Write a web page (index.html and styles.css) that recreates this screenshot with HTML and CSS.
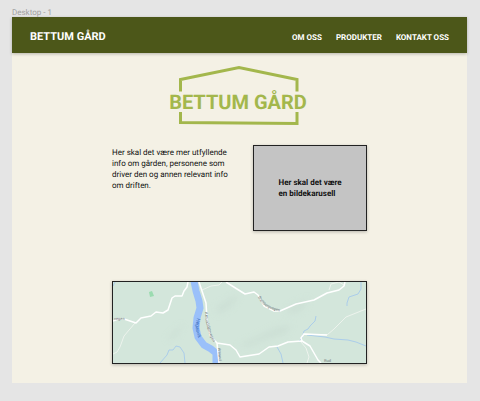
FILE: index.html
```html
<!DOCTYPE html>
<html lang="no">
<head>
<meta charset="utf-8">
<meta name="viewport" content="width=device-width, initial-scale=1">
<title>Bettum Gård</title>
<link rel="stylesheet" href="styles.css">
</head>
<body>
<p class="frame-label">Desktop - 1</p>
<div class="page">
  <header class="header">
    <a class="brand" href="#">BETTUM GÅRD</a>
    <nav class="nav">
      <a href="#om">OM OSS</a>
      <a href="#produkter">PRODUKTER</a>
      <a href="#kontakt">KONTAKT OSS</a>
    </nav>
  </header>
  <main class="main">
    <svg class="logo" viewBox="167 64 146 62" role="img" aria-label="Bettum Gård">
      <path d="M180.500 91.500V79.500L239 67.500L297 79.500V91.500M180.500 112V122.500L297 123.500V112" fill="none" stroke="#a3b74c" stroke-width="3"/>
      <text x="238" y="108.500" text-anchor="middle">BETTUM GÅRD</text>
    </svg>
    <section class="intro" id="om">
      <p class="intro-text">Her skal det være mer utfyllende info om gården, personene som driver den og annen relevant info om driften.</p>
      <div class="carousel"><p>Her skal det være<br>en bildekarusell</p></div>
    </section>
    <section class="map" id="kontakt">
      <svg viewBox="113 282 253 81" role="img" aria-label="Kart">
        <defs>
          <filter id="soft" x="-20%" y="-20%" width="140%" height="140%"><feGaussianBlur stdDeviation="3"/></filter>
          <path id="river-name" d="M197 318Q194 328 199 340"/>
          <path id="west-road-name" d="M205 312Q206 331 214 343"/>
          <path id="south-road-name" d="M218 348L219 362"/>
          <path id="east-road-name" d="M258 297Q264 310 284 312"/>
        </defs>
        <rect x="113" y="282" width="253" height="81" fill="#d3e6db"/>
        <g fill="#c7dad0" opacity=".5" filter="url(#soft)">
          <path d="M238 345L256 337L276 327L292 325L286 334L265 340L248 347Z"/>
          <path d="M217 306L230 298L240 294L231 307L217 315Z"/>
          <path d="M166 340L178 327L183 325L176 338Z"/>
          <path d="M288 307L309 298L303 310L288 315Z"/>
        </g>
        <path d="M149 292L152 291L154 296L150 297Z" fill="#9bdbb0"/>
        <g fill="none" stroke="#abcdea" stroke-width="1">
          <path d="M160 363L167 355L169 350L173 350L176 346L180 347L184 353L185 363"/>
          <path d="M316 316L315 321L310 326L308 329L304 331L302 338L299 341"/>
          <path d="M307 335L325 337L334 339L348 340L356 342L366 346"/>
          <path d="M361 282L361 289L358 294L349 297L347 303L347 306"/>
          <path d="M277 347L281 354L283 363M113 286L115 282"/>
        </g>
        <path d="M194 281L196 291L199 301L200 308L197 318L196 328L198 337L204 345L211 349L216 353L216 364" fill="none" stroke="#9ac0fa" stroke-width="7"/>
        <g fill="none" stroke="#edf3ed" stroke-width="1">
          <path d="M135 323L124 336L120 347L117 352L113 354M202 290L211 286L219 285L222 282"/>
          <path d="M303 334L327 335L334 329L346 317L366 309M301 342L306 348L309 357L307 363M329 290L331 284L339 282L344 285"/>
        </g>
        <g fill="none" stroke="#fff" stroke-width="1.500" stroke-linejoin="round">
          <path d="M113 321L118 319L124 319L136 323L141 318L151 316L156 312L163 313L168 310L172 298L175 296L182 296L184 291L187 287L188 282"/>
          <path d="M199 282L206 303L207 319L210 335L217 343L230 345L236 350L240 357L259 354L269 347L278 346L288 342L302 341L310 346L318 360L321 363M217 343L219 363"/>
          <path d="M226 282L237 289L245 294L254 292L258 295L264 306L274 311L280 311L296 304L314 300L327 293L339 290L344 286L345 282M302 341L301 338L304 334L327 335"/>
        </g>
        <g class="map-labels">
          <text class="river-label"><textPath href="#river-name">Hegasvik</textPath></text>
          <text><textPath href="#west-road-name">Amundslåttvegen</textPath></text>
          <text><textPath href="#south-road-name">Amund</textPath></text>
          <text><textPath href="#east-road-name">Brattbergvegen</textPath></text>
          <text x="114" y="320">vegen</text>
          <text x="324" y="362">Rud</text>
        </g>
      </svg>
    </section>
  </main>
</div>
</body>
</html>
```

FILE: styles.css
```css
* {
  box-sizing: border-box;
}

body {
  margin: 0;
  padding: 8px 13px 18px 12px;
  min-height: 100vh;
  display: flex;
  flex-direction: column;
  background: #e5e5e5;
  color: #111;
  font: 8px/11px Roboto, sans-serif;
  text-rendering: geometricPrecision;
}

p {
  margin: 0;
}

a {
  color: inherit;
  text-decoration: none;
}

.frame-label {
  height: 9px;
  line-height: 9px;
  color: #a0a0a0;
}

.page {
  flex: 1;
  background: #f4f1e5;
}

.header {
  display: flex;
  align-items: center;
  justify-content: space-between;
  padding: 13px 18px 9px;
  background: #4c5719;
  color: #fff;
  font-weight: 700;
  box-shadow: 0 1px 3px rgba(0, 0, 0, .25);
}

.brand {
  font-size: 11px;
  line-height: 14px;
}

.nav {
  display: flex;
  gap: 14px;
}

.main {
  display: flex;
  flex-direction: column;
  align-items: center;
  padding: 11px 100px 18px;
}

.logo {
  width: 146px;
  height: 62px;
}

.logo text {
  fill: #a3b74c;
  font-size: 20px;
  font-weight: 700;
}

.intro {
  display: grid;
  grid-template-columns: 11fr 10fr;
  gap: 16px;
  width: 100%;
  margin-top: 19px;
}

.intro-text {
  padding-top: 2px;
}

.carousel {
  display: grid;
  place-items: center;
  min-height: 86px;
  background: #c4c4c4;
  border: 1px solid #222;
  box-shadow: 0 1px 3px rgba(0, 0, 0, .25);
  font-weight: 700;
}

.map {
  width: 100%;
  margin-top: 50px;
  border: 1px solid #222;
  box-shadow: 0 1px 3px rgba(0, 0, 0, .25);
}

.map svg {
  display: block;
  width: 100%;
  height: auto;
}

.map-labels {
  fill: #6f7476;
  font-size: 4px;
}

.map-labels .river-label {
  fill: #2c65b8;
  font-size: 5px;
}
```
